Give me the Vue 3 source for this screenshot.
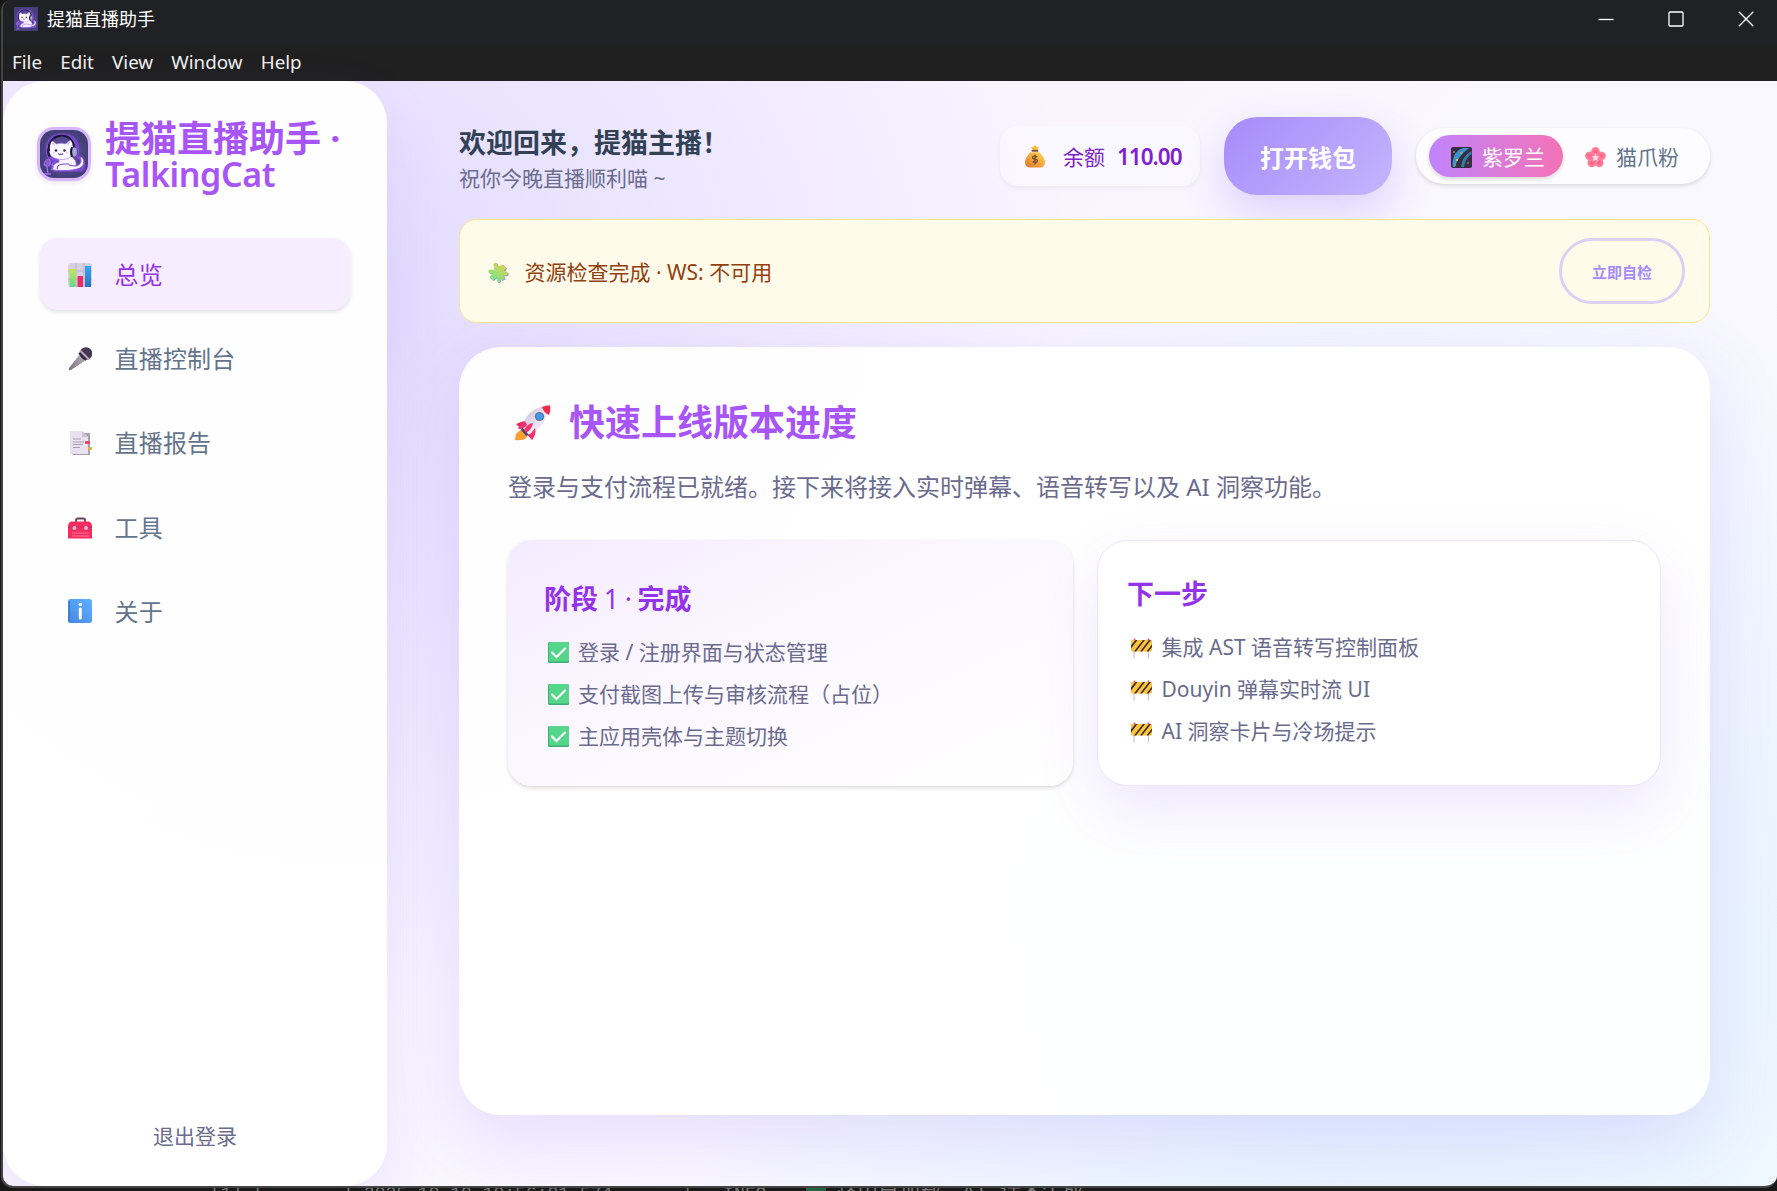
<script setup>
const menus = ['File', 'Edit', 'View', 'Window', 'Help']
const nav = [
  { icon: 'chart', label: '总览', active: true },
  { icon: 'mic', label: '直播控制台' },
  { icon: 'report', label: '直播报告' },
  { icon: 'toolbox', label: '工具' },
  { icon: 'info', label: '关于' },
]
const done = ['登录 / 注册界面与状态管理', '支付截图上传与审核流程（占位）', '主应用壳体与主题切换']
const next = ['集成 AST 语音转写控制面板', 'Douyin 弹幕实时流 UI', 'AI 洞察卡片与冷场提示']
</script>

<template>
  <div class="desktop">
    <svg class="defs" width="0" height="0" aria-hidden="true">
      <defs>
        <linearGradient id="gGreen" x1="0" y1="0" x2="0" y2="1"><stop offset="0" stop-color="#c5e84f" /><stop offset="1" stop-color="#62d98b" /></linearGradient>
        <linearGradient id="gBlue" x1="0" y1="0" x2="0" y2="1"><stop offset="0" stop-color="#35a8f5" /><stop offset="1" stop-color="#2f72bd" /></linearGradient>
        <linearGradient id="gInfo" x1="1" y1="0" x2="0" y2="1"><stop offset="0" stop-color="#5bb2ff" /><stop offset="1" stop-color="#4b86e6" /></linearGradient>
        <linearGradient id="gGold" x1="1" y1="0" x2="0" y2="1"><stop offset="0" stop-color="#ffd84e" /><stop offset=".5" stop-color="#f2a83b" /><stop offset="1" stop-color="#d9752f" /></linearGradient>
        <linearGradient id="gPuzzle" x1=".8" y1="0" x2=".2" y2="1"><stop offset="0" stop-color="#e3d444" /><stop offset="1" stop-color="#6be795" /></linearGradient>
        <linearGradient id="gMic" x1="1" y1="0" x2="0" y2="1"><stop offset="0" stop-color="#bdb5c4" /><stop offset="1" stop-color="#77717d" /></linearGradient>
        <linearGradient id="gBody" x1="0" y1="0" x2="1" y2="1"><stop offset="0" stop-color="#bdb4c8" /><stop offset=".6" stop-color="#eee5f3" /></linearGradient>
        <radialGradient id="gCat"><stop offset="0" stop-color="#6d58b4" /><stop offset="1" stop-color="#443f78" /></radialGradient>
        <radialGradient id="gFlower"><stop offset="0" stop-color="#ff5a80" /><stop offset="1" stop-color="#ff8ba2" /></radialGradient>
        <symbol id="cat" viewBox="0 0 48 48">
          <rect width="48" height="48" fill="url(#gCat)" />
          <path d="M9 27C4 14 11 5 22 5s18 8 15 21c7 4 8 10 5 14H14c-3-3 0-9 3-11-5 0-7-1-8-2z" fill="none" stroke="#9c4dff" stroke-width="3.500" opacity=".6" />
          <path d="M13 40c-2-3 1-7 6-8l-1-5 13-1c4 3 6 6 5 10 5-1 6-5 4-9 4-1 6 8 0 11-7 3-18 3-27 2z" fill="#f8f5ff" stroke="#8a54dc" stroke-width=".9" />
          <path d="M9.500 23c-.5-5 .5-9 1.500-13l5.500 4q4.500-1.500 9 0L31.500 9c1.500 5 2 9 1.500 14-1 4-5 6.500-11 6.500S10.500 27 9.500 23z" fill="#fbf9ff" stroke="#a982ee" stroke-width=".7" />
          <path d="M12 13l2.500 2M30 12l-2.500 2.500" stroke="#d6c3f5" stroke-width="1.300" />
          <path d="M9 21C6 2 35 0 34 19" fill="none" stroke="#161431" stroke-width="1.800" />
          <path d="M9 18q-2 4 1 9" stroke="#221c48" stroke-width="2.200" fill="none" /><ellipse cx="34.500" cy="22" rx="2.800" ry="5" fill="#a5a5dc" stroke="#3f3b72" stroke-width=".7" /><path d="M32 17q-2 5 0 9.500" stroke="#15132b" stroke-width="2" fill="none" />
          <circle cx="16" cy="20.500" r="1.300" fill="#302750" /><circle cx="24.500" cy="20.500" r="1.300" fill="#302750" />
          <circle cx="13.800" cy="23" r="1" fill="#f4c8e9" /><circle cx="27" cy="23" r="1" fill="#f4c8e9" />
          <path d="M18 23.500q2 2.500 2.300 0q1 2.500 2.700 0M17 39c0-3 3-5 8-5h4M29 35q4 1 7 1" fill="none" stroke="#7950bf" stroke-width="1.100" />
          <path d="M4 35q0-5 5-6 3 2 1 6-3 3-6 0z" fill="#865bcf" stroke="#b070ff" stroke-width=".8" /><path d="M7 37l1 7m-4 0h7M12 34q3 3-1 6" fill="none" stroke="#a96cff" stroke-width="1.300" />
        </symbol>
        <symbol id="chart" viewBox="0 0 24 24">
          <rect width="24" height="24" rx="3" fill="#d7d0df" /><path d="M0 8h24M0 16h24M8 0v24M16 0v24" stroke="#bdb5c7" />
          <rect x="1.500" y="6" width="6" height="18" fill="url(#gGreen)" /><rect x="9.500" y="13" width="5.500" height="11" fill="#e92b69" /><rect x="17" y="3" width="6" height="21" fill="url(#gBlue)" />
        </symbol>
        <symbol id="mic" viewBox="0 0 24 24">
          <path d="M12 7l6 6L3 23q-3 1-2-2z" fill="url(#gMic)" /><circle cx="18" cy="6.500" r="6.300" fill="#493653" /><path d="M12 3.500l9 9" stroke="#b5aabd" stroke-width="2" /><path d="M11 6l7 7" stroke="#382543" stroke-width="2" />
        </symbol>
        <symbol id="report" viewBox="0 0 24 24">
          <path d="M5 2h17v22H5z" fill="#aaa0b5" /><path d="M2 0h12l6 6v17H2z" fill="#e9e0f0" /><path d="M14 0v6h6z" fill="#c9bfd2" />
          <path d="M5 8h8M5 11h11M5 13.500h10M5 16.500h7" stroke="#aaa0b3" /><rect x="17" y="10" width="5" height="3" rx="1" fill="#e84463" /><rect x="20" y="16" width="4" height="3" rx="1" fill="#e4b141" />
        </symbol>
        <symbol id="toolbox" viewBox="0 0 24 24">
          <g transform="translate(0 1.500)">
            <path d="M8 6V3.500q0-1.500 2-1.500h5q2 0 2 1.500V6" fill="none" stroke="#65405f" stroke-width="1.800" /><path d="M3 5h18q3 1 3 5v12H0V10q0-4 3-5z" fill="#f52e60" /><path d="M0 10.500h24" stroke="#d62259" />
            <circle cx="6.500" cy="11.500" r="2" fill="#d3b9df" /><circle cx="18" cy="11.500" r="2" fill="#d3b9df" /><path d="M4 16.500h17M4 19.500h17" stroke="#ff7796" />
          </g>
        </symbol>
        <symbol id="info" viewBox="0 0 24 24">
          <rect width="24" height="24" rx="2.500" fill="url(#gInfo)" /><path d="M1.200 2v21" stroke="#3979d1" stroke-width="1.500" /><circle cx="12.300" cy="5.500" r="1.700" fill="#fff" /><path d="M12.300 10v9" stroke="#fff" stroke-width="3" stroke-linecap="round" />
        </symbol>
        <symbol id="money" viewBox="0 0 21 24">
          <path d="M10.500 0l1.500 2.500 3 .3-2 2 .3 1.200H7.700L8 4.800l-2-2 3-.3z" fill="#f7bb3b" /><path d="M6 8h9q6 6 6 10 0 6-5 6H5q-5 0-5-6Q0 14 6 8z" fill="url(#gGold)" /><path d="M7 6.500h7" stroke="#865038" stroke-width="2" />
          <path d="M13 13q-5-2-5 .7 0 1.300 2.500 1.600 2.500.4 2.500 1.700Q13 20 8 18M10.500 10.500v10.500" fill="none" stroke="#785031" stroke-width="1.500" />
        </symbol>
        <symbol id="galaxy" viewBox="0 0 21 21">
          <rect width="21" height="21" rx="2" fill="#342f43" /><path d="M1.500 17Q2 4 12 1h6Q7 9 4 20H2z" fill="#3d94cc" /><path d="M10 20Q11 9 20.500 4v3Q14 12 13 20z" fill="#347ba8" />
          <g fill="#ffd03f"><circle cx="3" cy="5" r=".8" /><circle cx="10" cy="6" r=".8" /><circle cx="6" cy="13" r="1" /><circle cx="17" cy="16" r=".7" /><circle cx="4" cy="18" r=".6" /></g>
        </symbol>
        <symbol id="flower" viewBox="0 0 21 21">
          <g fill="url(#gFlower)"><ellipse cx="10.500" cy="5" rx="4.500" ry="5" /><ellipse cx="10.500" cy="5" rx="4.500" ry="5" transform="rotate(72 10.500 10.800)" /><ellipse cx="10.500" cy="5" rx="4.500" ry="5" transform="rotate(144 10.500 10.800)" /><ellipse cx="10.500" cy="5" rx="4.500" ry="5" transform="rotate(216 10.500 10.800)" /><ellipse cx="10.500" cy="5" rx="4.500" ry="5" transform="rotate(288 10.500 10.800)" /></g>
          <path d="M10.500 6l1 3.500 3.500-.5-3 2.200 1.500 3.500-3-2.200-3 2.200L9 11.200 6 9l3.500.5z" fill="#ffe2ee" />
        </symbol>
        <symbol id="puzzle" viewBox="0 0 21 21">
          <path d="M6 4.500C4 1 8.500-1 9.500 2.500L10 5 14.500 2.500 18.500 6.500 15.500 9.500C18 8.500 21 10.500 19.500 13 18.500 14.500 16.500 14 15.500 13L17 17 13.500 18.500 11.500 15.500C13 18.500 12.500 21 10.300 20.500 8.500 20 9 17.500 9 15.500L5 18.500 1.500 15.500 5 11.500C2 12.500-.5 10.500 .8 8.500 2 7 4.500 8 6.500 8.500z" fill="#a793bb" transform="translate(.7 .5)" />
          <path d="M6 4.500C4 1 8.500-1 9.500 2.500L10 5 14.500 2.500 18.500 6.500 15.500 9.500C18 8.500 21 10.500 19.500 13 18.500 14.500 16.500 14 15.500 13L17 17 13.500 18.500 11.500 15.500C13 18.500 12.500 21 10.300 20.500 8.500 20 9 17.500 9 15.500L5 18.500 1.500 15.500 5 11.500C2 12.500-.5 10.500 .8 8.500 2 7 4.500 8 6.500 8.500z" fill="url(#gPuzzle)" transform="scale(.98)" />
        </symbol>
        <symbol id="rocket" viewBox="0 0 36 36">
          <path d="M6 25q6 0 6 7-3 4-12 3 0-8 6-10z" fill="#ff9d2e" /><path d="M9 16l-8 3 6 6zM20 26l-3 9-6-7z" fill="#f0275d" /><path d="M6 25Q12 2 32 1 35 20 11 31z" fill="url(#gBody)" />
          <path d="M27 2q8-3 8-1 1 4-1 9-5-2-7-8z" fill="#ef2b4b" /><path d="M6 25l5 6 3-1-7-8z" fill="#4c4370" />
          <path d="M10 16q-5 3-7 8 6 0 9-4zM20 23q2 6-3 12-2-5 0-8zM9 25q3-6 9-7-1 6-7 10z" fill="#f5326b" />
          <circle cx="24.500" cy="11.500" r="4.600" fill="#72667f" /><circle cx="24.500" cy="11.500" r="3.400" fill="#3b9cf5" />
        </symbol>
        <symbol id="check" viewBox="0 0 21 21">
          <rect width="21" height="21" rx="1.500" fill="#3fae73" /><rect x="1" width="20" height="19.500" rx="1.500" fill="#55d68b" /><path d="M4 10.500l4.500 4.500L17 6.500" fill="none" stroke="#fff" stroke-width="2.100" stroke-linecap="round" />
        </symbol>
        <symbol id="barrier" viewBox="0 0 21 20">
          <path d="M3 11v9M17.500 11v9" stroke="#d4bfd3" stroke-width="1.200" /><rect y="1.500" width="21" height="11.500" rx="1" fill="#ffc43a" /><path d="M0 7l4.500-5.500h2L0 10zM3 13l9-11.500H14L5 13zM9 13L18 1.500H20L11 13zM15.500 13l5.500-7v2.500L17.500 13z" fill="#332a3d" />
          <circle cx="3.500" cy="1" r="1" fill="#e64b7a" /><circle cx="17.500" cy="1" r="1" fill="#e64b7a" />
        </symbol>
      </defs>
    </svg>

    <div class="window">
      <header class="titlebar">
        <svg class="app-icon"><use href="#cat" /></svg>
        <span class="app-name">提猫直播助手</span>
        <div class="controls">
          <svg viewBox="0 0 16 16"><path d="M.5 8.500h15" /></svg>
          <svg viewBox="0 0 16 16"><rect x="1" y="1" width="14" height="14" rx="1" /></svg>
          <svg viewBox="0 0 16 16"><path d="M.8 .8l14.500 14.500M15.300 .8L.8 15.300" /></svg>
        </div>
      </header>
      <nav class="menubar"><span v-for="m in menus" :key="m">{{ m }}</span></nav>

      <div class="app">
        <aside class="sidebar">
          <div class="brand">
            <svg class="logo"><use href="#cat" /></svg>
            <div class="brand-name"><b>提猫直播助手 ·</b><span>TalkingCat</span></div>
          </div>
          <div class="nav">
            <div v-for="n in nav" :key="n.label" class="nav-item" :class="{ active: n.active }">
              <svg><use :href="'#' + n.icon" /></svg><span>{{ n.label }}</span>
            </div>
          </div>
          <div class="logout">退出登录</div>
        </aside>

        <main class="main">
          <div class="topbar">
            <div class="greeting">
              <h1>欢迎回来，提猫主播！</h1>
              <p>祝你今晚直播顺利喵 ~</p>
            </div>
            <div class="balance"><svg><use href="#money" /></svg><span>余额</span><b>110.00</b></div>
            <button class="wallet">打开钱包</button>
            <div class="themes">
              <div class="theme on"><svg><use href="#galaxy" /></svg><span>紫罗兰</span></div>
              <div class="theme"><svg><use href="#flower" /></svg><span>猫爪粉</span></div>
            </div>
          </div>

          <div class="banner">
            <svg><use href="#puzzle" /></svg>
            <span class="banner-text">资源检查完成 · WS: 不可用</span>
            <button class="recheck">立即自检</button>
          </div>

          <section class="panel">
            <h2><svg><use href="#rocket" /></svg><span>快速上线版本进度</span></h2>
            <p class="lead">登录与支付流程已就绪。接下来将接入实时弹幕、语音转写以及 AI 洞察功能。</p>
            <div class="cards">
              <div class="card stage">
                <h3>阶段 <i>1 ·</i> 完成</h3>
                <div v-for="t in done" :key="t" class="row"><svg class="check"><use href="#check" /></svg><span>{{ t }}</span></div>
              </div>
              <div class="card next">
                <h3>下一步</h3>
                <div v-for="t in next" :key="t" class="row"><svg class="barrier"><use href="#barrier" /></svg><span>{{ t }}</span></div>
              </div>
            </div>
          </section>
        </main>
      </div>
    </div>
    <div class="terminal"><span class="t1">[1] [</span><span class="t2">]</span><span class="t3">2025-10-10 10:56:01,574</span><span class="t4">|</span><span class="t5">INFO</span><i></i><span class="t6">路由已加载，AI 话术生成</span></div>
  </div>
</template>

<style>
body { margin: 0; background: #181818; overflow: hidden; }
</style>

<style scoped>
* { box-sizing: border-box; }
h1, h2, h3, p { margin: 0; }
button { font-family: inherit; padding: 0; }
svg { display: block; flex: none; }
.defs { position: absolute; }
.desktop { position: relative; width: 1777px; height: 1191px; overflow: hidden; background: #181818; font-family: "Noto Sans", "Noto Sans CJK SC", sans-serif; display: flex; flex-direction: column; }
.window { margin-left: 1px; width: 1776px; height: 1188px; flex: none; border: solid #444; border-width: 0 0 2px 2px; border-radius: 10px 0 12px 12px; overflow: hidden; display: flex; flex-direction: column; background: #202020; }
.titlebar { height: 43px; flex: none; background: #202124; display: flex; align-items: center; padding: 0 23px 5px 11px; }
.app-icon { width: 24px; height: 24px; }
.app-name { color: #fff; font-size: 18px; margin-left: 9px; line-height: 24px; }
.controls { margin-left: auto; display: flex; gap: 54px; }
.controls svg { width: 16px; height: 16px; fill: none; stroke: #fff; stroke-width: 1.300; }
.menubar { height: 38px; flex: none; display: flex; gap: 18.200px; padding: 5px 0 0 9px; color: #f0f0f0; font: 18.800px/28px "Noto Sans", sans-serif; }
.app { flex: 1; display: flex; background: radial-gradient(circle at 20% 20%, rgba(190, 175, 253, .38), transparent 43%), radial-gradient(circle at 80% 80%, rgba(186, 230, 253, .42), transparent 45%), linear-gradient(135deg, #f9f6ff, #f8f5ff 40%, #fbfcff); }
.sidebar { width: 384px; height: 1105px; flex: none; border-radius: 42px; background: rgba(255, 255, 255, .94); padding: 37px 36px 35px; display: flex; flex-direction: column; box-shadow: 0 24px 60px rgba(139, 92, 246, .11); }
.brand { display: flex; align-items: center; height: 72px; margin-left: -2px; }
.logo { width: 54px; height: 54px; border: 3px solid #d8b4fe; border-radius: 17px; box-shadow: 0 2px 5px rgba(80, 40, 140, .12); }
.brand-name { margin: 5px 0 0 14px; color: #a855f7; font-size: 36px; line-height: 36px; white-space: nowrap; }
.brand-name b, .brand-name span { display: block; }
.brand-name span { font-weight: 600; font-size: 34px; letter-spacing: -.4px; margin-top: -1px; }
.nav { margin-top: 48px; display: flex; flex-direction: column; gap: 12px; }
.nav-item { height: 72.200px; width: 310px; display: flex; align-items: center; gap: 22.500px; padding-left: 28px; margin-left: 1px; border-radius: 18px; color: #64748b; font-size: 24px; }
.nav-item svg { width: 24px; height: 24px; margin-top: 1px; }
.nav-item span { margin-top: -1px; letter-spacing: .2px; }
.nav-item.active { background: #f6edff; color: #9333ea; box-shadow: 0 2px 4px rgba(0, 0, 0, .12); }
.logout { margin-top: auto; text-align: center; font-size: 21px; line-height: 30px; color: #6b6b8d; }
.main { flex: 1; min-width: 0; padding: 36px 67px 71px 72px; display: flex; flex-direction: column; }
.topbar { height: 78px; display: flex; align-items: center; flex: none; }
.greeting { margin: 7px auto 0 0; white-space: nowrap; }
.greeting h1 { font-size: 27px; line-height: 38px; color: #334155; }
.greeting p { font-size: 21px; line-height: 32px; color: #6b6b8d; margin-bottom: 2px; }
.balance { width: 200px; height: 60px; padding-left: 25px; border-radius: 18px; display: flex; align-items: center; color: #7e22ce; font-size: 21px; background: rgba(255, 255, 255, .3); box-shadow: 0 2px 4px rgba(0, 0, 0, .05); }
.balance svg { width: 20px; height: 24px; margin-right: 18px; }
.balance b { font-size: 22.500px; font-weight: 600; margin: 1px 0 0 12px; letter-spacing: -1px; }
.wallet { width: 168px; height: 78px; margin: 0 24px; border: 0; border-radius: 33px; color: #fff; font-size: 24px; font-weight: 700; background: linear-gradient(135deg, #a78bfa, #c4b5fd); box-shadow: 0 18px 42px rgba(139, 92, 246, .24); }
.themes { width: 294px; height: 56px; border-radius: 28px; background: #fdfdff; box-shadow: 0 2px 4px rgba(0, 0, 0, .13); display: flex; align-items: center; padding-left: 13px; color: #64748b; }
.theme { width: 134px; height: 42px; border-radius: 21px; display: flex; align-items: center; gap: 10px; padding-left: 22px; font-size: 21px; white-space: nowrap; }
.theme svg { width: 21px; height: 21px; margin-top: 2px; }
.theme.on { color: #fff; background: linear-gradient(90deg, #c084fc, #f472b6); box-shadow: 0 2px 4px rgba(0, 0, 0, .15); }
.banner { height: 104px; flex: none; margin-top: 24px; border: 1px solid #fde68a; border-radius: 18px; background: #fffbeb; display: flex; align-items: center; padding: 0 24px 0 28px; color: #92400e; font-size: 21px; position: relative; }
.banner svg { width: 21px; height: 21px; margin: 2px 15.500px 0 0; }
.recheck { margin-left: auto; width: 126px; height: 66px; border: 3px solid #ddd0f3; border-radius: 33px; background: transparent; color: #a78bfa; font-size: 15px; font-weight: 700; }
.panel { flex: 1; margin-top: 24px; border-radius: 42px; background: rgba(255, 255, 255, .95); padding: 48px 49px; box-shadow: 0 24px 72px rgba(139, 92, 246, .17); }
.panel h2 { height: 56px; display: flex; align-items: center; color: #a855f7; font-size: 36px; padding-left: 7px; }
.panel h2 svg { width: 36px; height: 36px; margin-right: 18px; }
.panel h2 span { margin-top: -5px; }
.lead { margin-top: 18px; margin-bottom: 1px; font-size: 24px; line-height: 36px; color: #6b6b8d; white-space: nowrap; }
.cards { display: flex; gap: 24px; margin-top: 35px; }
.card { height: 246px; }
.card h3 { font-size: 27px; line-height: 40px; color: #9333ea; word-spacing: -1.400px; }
.card h3 i { font-style: normal; font-weight: 400; }
.row { height: 42px; display: flex; align-items: center; color: #6b6b8d; font-size: 21px; white-space: nowrap; }
.stage { width: 565px; border-radius: 24px; padding: 39px 36px; background: linear-gradient(155deg, #f5ebff, #fbf7ff 45%, #fff); box-shadow: 0 2px 4px rgba(0, 0, 0, .14); }
.stage .row:nth-of-type(1) { margin-top: 11px; }
.next { width: 564px; border-radius: 30px; padding: 33px 29px; background: #fff; border: 1px solid #ebe5fd; box-shadow: 0 24px 60px rgba(139, 92, 246, .15); }
.next .row:nth-of-type(1) { margin-top: 11px; }
.row svg { width: 21px; height: 21px; margin: 2px 9px 0 4px; }
.row .barrier { margin: 4px 9.500px 0 4px; }
.terminal { height: 3px; overflow: hidden; background: #191919; color: #777; font: 18px/20px "Liberation Mono", "Noto Sans CJK SC", monospace; display: flex; }
.terminal span { white-space: pre; margin-top: -4px; }
.t1 { margin-left: 210px; }
.t2 { margin-left: 78px; }
.t3 { margin-left: 11px; }
.t4 { margin-left: 70px; }
.t5 { margin-left: 30px; }
.terminal i { width: 20px; height: 3px; background: #216441; margin: 0 10px 0 40px; }
.terminal .t6 { font-size: 21px; margin-top: -5px; }
</style>
